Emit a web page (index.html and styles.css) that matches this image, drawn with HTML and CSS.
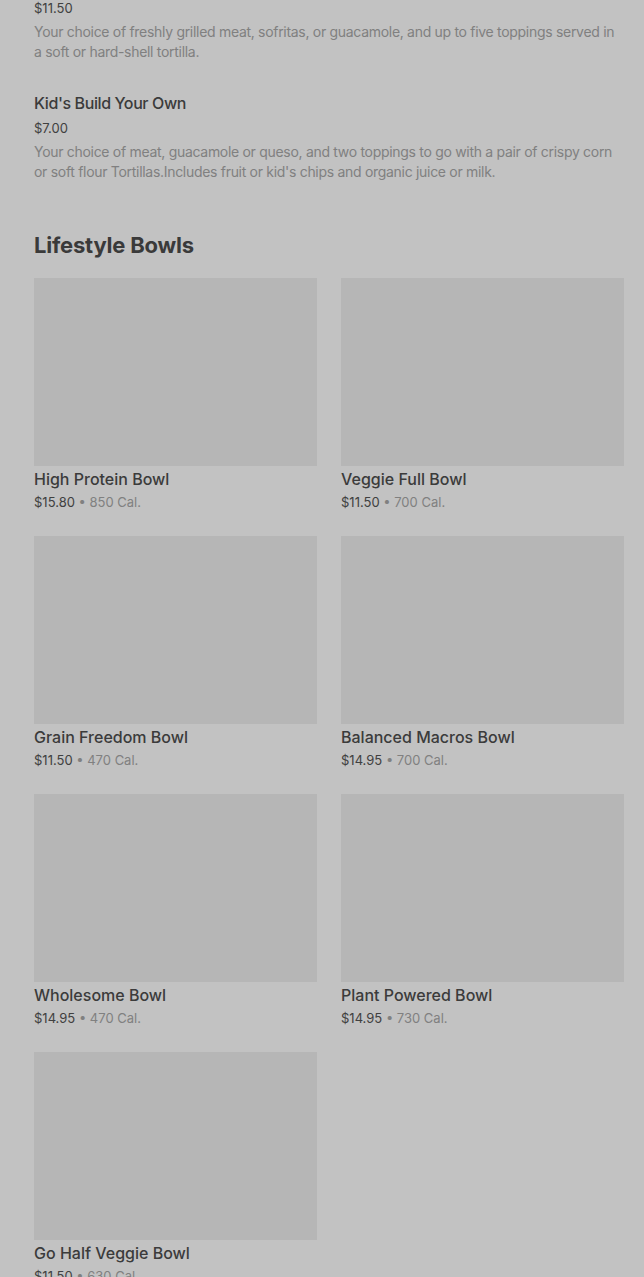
FILE: index.html
```html
<!DOCTYPE html>
<html lang="en">
<head>
    <meta charset="UTF-8">
    <meta name="viewport" content="width=device-width, initial-scale=1.0">
    <title>Menu</title>
    <link rel="stylesheet" href="styles.css">
</head>
<body>

    <!-- items from the previous section (page scrolled) -->
    <div class="menu-list">
        <div class="menu-item first">
            <div class="item-price">$11.50</div>
            <p class="item-desc">Your choice of freshly grilled meat, sofritas, or guacamole, and up to five toppings served in a soft or hard-shell tortilla.</p>
        </div>
        <div class="menu-item">
            <h3 class="item-name">Kid's Build Your Own</h3>
            <div class="item-price">$7.00</div>
            <p class="item-desc">Your choice of meat, guacamole or queso, and two toppings to go with a pair of crispy corn or soft flour Tortillas.Includes fruit or kid's chips and organic juice or milk.</p>
        </div>
    </div>

    <!-- Lifestyle Bowls -->
    <h2 class="section-title">Lifestyle Bowls</h2>
    <div class="bowl-grid">
        <div class="bowl-card">
            <div class="bowl-img"></div>
            <div class="bowl-name">High Protein Bowl</div>
            <div class="bowl-meta">$15.80 <span class="cal">• 850 Cal.</span></div>
        </div>
        <div class="bowl-card">
            <div class="bowl-img"></div>
            <div class="bowl-name">Veggie Full Bowl</div>
            <div class="bowl-meta">$11.50 <span class="cal">• 700 Cal.</span></div>
        </div>
        <div class="bowl-card">
            <div class="bowl-img"></div>
            <div class="bowl-name">Grain Freedom Bowl</div>
            <div class="bowl-meta">$11.50 <span class="cal">• 470 Cal.</span></div>
        </div>
        <div class="bowl-card">
            <div class="bowl-img"></div>
            <div class="bowl-name">Balanced Macros Bowl</div>
            <div class="bowl-meta">$14.95 <span class="cal">• 700 Cal.</span></div>
        </div>
        <div class="bowl-card">
            <div class="bowl-img"></div>
            <div class="bowl-name">Wholesome Bowl</div>
            <div class="bowl-meta">$14.95 <span class="cal">• 470 Cal.</span></div>
        </div>
        <div class="bowl-card">
            <div class="bowl-img"></div>
            <div class="bowl-name">Plant Powered Bowl</div>
            <div class="bowl-meta">$14.95 <span class="cal">• 730 Cal.</span></div>
        </div>
        <div class="bowl-card">
            <div class="bowl-img"></div>
            <div class="bowl-name">Go Half Veggie Bowl</div>
            <div class="bowl-meta">$11.50 <span class="cal">• 630 Cal.</span></div>
        </div>
    </div>

</body>
</html>
```

FILE: styles.css
```css
/* base page, greyed out behind an overlay */
body {
    font-family: 'Inter', 'Liberation Sans', sans-serif;
    margin: 0;
    padding: 0 20px 0 34px;
    background-color: #c2c2c2;
    color: #3b3b3b;
    overflow: hidden;
}

/* list of menu items */
.menu-list {
    display: flex;
    flex-direction: column;
    gap: 29px;
    margin-top: -2px;
}

.item-name {
    margin: 0;
    font-size: 16px;
    font-weight: 500;
    line-height: 24px;
    letter-spacing: -0.4px;
    color: #3b3b3b;
}

.item-price {
    margin-top: 3px;
    font-size: 13px;
    line-height: 20px;
    color: #404040;
}

.menu-item.first .item-price {
    margin-top: 0;
}

.item-desc {
    margin: 4px 0 0;
    font-size: 14px;
    line-height: 20px;
    color: #808080;
    letter-spacing: -0.3px;
}

/* section heading */
.section-title {
    margin: 49px 0 19px;
    font-size: 22px;
    font-weight: 700;
    line-height: 28px;
    letter-spacing: -0.2px;
    color: #3a3a3a;
}

/* grid of bowls */
.bowl-grid {
    display: grid;
    grid-template-columns: 283px 283px;
    column-gap: 24px;
    row-gap: 25px;
}

.bowl-img {
    height: 188px;
    background-color: #b6b6b6;
}

.bowl-name {
    margin-top: 1px;
    font-size: 16px;
    font-weight: 500;
    line-height: 24px;
    color: #3b3b3b;
}

.bowl-meta {
    margin-top: 2px;
    font-size: 13px;
    line-height: 18px;
    color: #404040;
}

.bowl-meta .cal {
    color: #808080;
}
```
